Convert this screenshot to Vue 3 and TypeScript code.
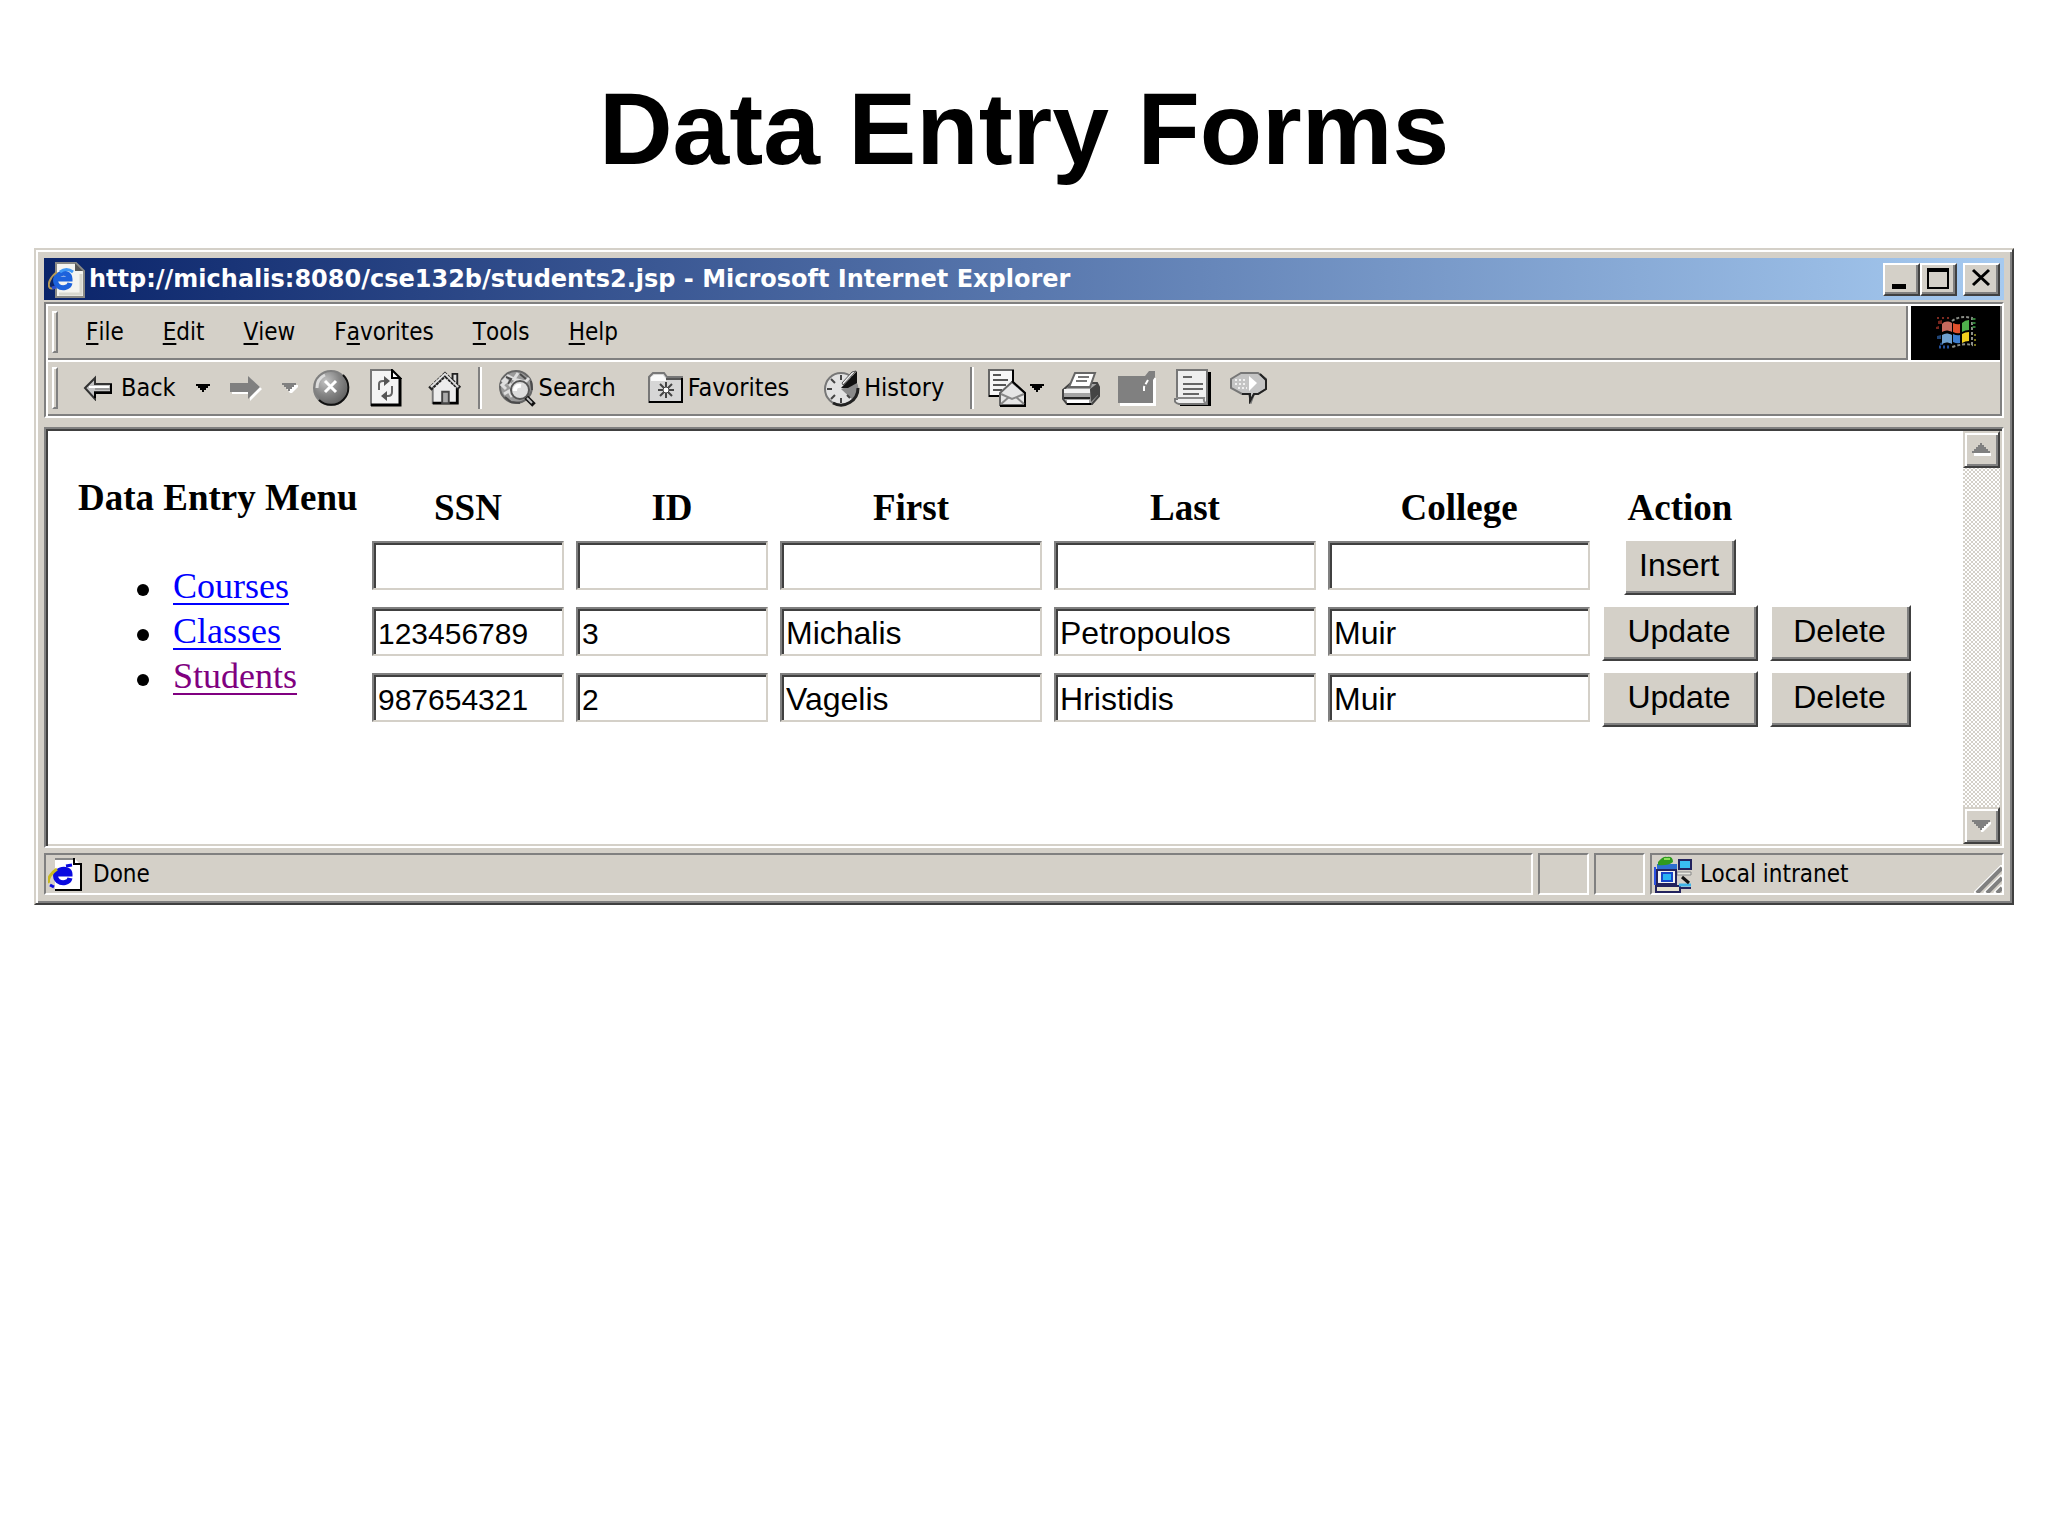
<script setup lang="ts">
import { ref } from 'vue'

interface Student {
  ssn: string
  id: string
  first: string
  last: string
  college: string
}
interface Column {
  key: keyof Student
  label: string
  size: 'narrow' | 'wide'
}

const menus: [string, string, string][] = [
  ['', 'F', 'ile'],
  ['', 'E', 'dit'],
  ['', 'V', 'iew'],
  ['F', 'a', 'vorites'],
  ['', 'T', 'ools'],
  ['', 'H', 'elp'],
]

const links = [
  { text: 'Courses', visited: false },
  { text: 'Classes', visited: false },
  { text: 'Students', visited: true },
]

const columns: Column[] = [
  { key: 'ssn', label: 'SSN', size: 'narrow' },
  { key: 'id', label: 'ID', size: 'narrow' },
  { key: 'first', label: 'First', size: 'wide' },
  { key: 'last', label: 'Last', size: 'wide' },
  { key: 'college', label: 'College', size: 'wide' },
]

const draft = ref<Student>({ ssn: '', id: '', first: '', last: '', college: '' })
const students = ref<Student[]>([
  { ssn: '123456789', id: '3', first: 'Michalis', last: 'Petropoulos', college: 'Muir' },
  { ssn: '987654321', id: '2', first: 'Vagelis', last: 'Hristidis', college: 'Muir' },
])
</script>

<template>
  <main class="slide">
    <h1 class="slide-title">Data Entry Forms</h1>

    <section class="window">
      <header class="titlebar">
        <svg class="app-icon" viewBox="0 0 37 37" aria-hidden="true">
          <path d="M8 2h20l8 8v26H8z" fill="#f4f4f0" stroke="#8a8a86" stroke-width="2" />
          <path d="M27 2v8h8z" fill="#555" />
          <path d="M33 13v20H11" fill="none" stroke="#d8d8d0" stroke-width="3" />
          <path d="M22 22c-1 5-8 6-12 3-4-4-3-10 2-12 5-2 10 0 10 5H10" fill="none" stroke="#1c62dc" stroke-width="5" />
          <path d="M12 11c4-3 9-3 13 0" fill="none" stroke="#3f97f5" stroke-width="3" />
          <path d="M9 11C2 16-1 24 2 27c1 1 4 0 6-1" fill="none" stroke="#b59a58" stroke-width="2" />
          <path d="M4 27l4-1" fill="none" stroke="#2a4fd0" stroke-width="3" />
        </svg>
        <span class="titlebar-text">http://michalis:8080/cse132b/students2.jsp - Microsoft Internet Explorer</span>
        <div class="window-buttons">
          <button class="bevel caption" type="button" aria-label="Minimize">
            <svg viewBox="0 0 24 24" aria-hidden="true"><path d="M3 18h14v5H3z" /></svg>
          </button>
          <button class="bevel caption" type="button" aria-label="Maximize">
            <svg viewBox="0 0 24 24" aria-hidden="true"><path d="M1 2h22v21H1zM3 6v15h18V6z" fill-rule="evenodd" /></svg>
          </button>
          <button class="bevel caption close" type="button" aria-label="Close">
            <svg viewBox="0 0 24 24" aria-hidden="true"><path d="M4 4l16 15M20 4L4 19" fill="none" stroke="#000" stroke-width="3" /></svg>
          </button>
        </div>
      </header>

      <div class="bars">
        <div class="menu-row">
          <nav class="bar menu" aria-label="Menu bar">
            <span class="grip"></span>
            <button v-for="m in menus" :key="m[2]" class="flat" type="button">{{ m[0] }}<u>{{ m[1] }}</u>{{ m[2] }}</button>
          </nav>
          <div class="brand">
            <svg viewBox="0 0 44 38" aria-hidden="true">
              <g opacity=".7">
                <path d="M4 7l4-1v4H4zM2 13l3-1v3H2z" fill="#a83428" />
                <path d="M3 22l4-1v4H3zM6 29l3-1v3H6z" fill="#2d62a8" />
              </g>
              <path d="M8 10c3-3 6-3 10-1v9c-4-2-7-2-10 0z" fill="#c96a5e" />
              <path d="M8 21c3-2 6-2 10 0v9c-4-2-7-2-10 0z" fill="#6fa0cf" />
              <path d="M19 9q4 2 7 1v9q-3 1-7-1z" fill="#e2512c" />
              <path d="M28 9q3-3 7-3v10q-4 0-7 2z" fill="#4fb04b" />
              <path d="M19 20q4 2 7 1v8q-3 1-7-1z" fill="#3d7ed0" />
              <path d="M28 20q3-2 7-2v9q-4 0-7 2z" fill="#f2cf1e" />
              <path d="M18 7q8-6 20-3v27q-8-2-20 2" fill="none" stroke="#8c8f88" stroke-width="2" stroke-dasharray="3 2" />
              <path d="M40 4v10" fill="none" stroke="#2f7d36" stroke-width="3" stroke-dasharray="2 2" />
              <path d="M41 20v14" fill="none" stroke="#7a741c" stroke-width="2" stroke-dasharray="2 3" />
              <path d="M5 33h12" fill="none" stroke="#23509c" stroke-width="3" stroke-dasharray="2 2" />
              <path d="M3 4h12" fill="none" stroke="#7d2a20" stroke-width="2" stroke-dasharray="2 3" />
            </svg>
          </div>
        </div>

        <div class="bar tools" role="toolbar" aria-label="Standard buttons">
          <span class="grip"></span>
          <button class="flat back" type="button">
            <svg width="30" height="26" viewBox="0 0 30 26" aria-hidden="true">
              <path d="M2 13L12 3v6h16v8H12v7z" fill="#c4c4c4" stroke="#333" stroke-width="2" />
              <path d="M6 12h20" stroke="#fff" stroke-width="2" />
              <path d="M12 14h15" stroke="#999" stroke-width="2" />
              <path d="M12 23v-5h16V9" fill="none" stroke="#000" stroke-width="2" />
            </svg>
            Back
          </button>
          <button class="flat caret-button" type="button" aria-label="Back history">
            <svg width="14" height="8" viewBox="0 0 14 8" aria-hidden="true"><path d="M0 0h14v2h-2v2h-2v2H8v2H6V6H4V4H2V2H0z" /></svg>
          </button>
          <button class="flat forward" type="button" aria-label="Forward">
            <svg width="32" height="28" viewBox="0 0 32 28" aria-hidden="true">
              <path d="M2 11h18V4l12 11-12 12v-7H2z" fill="#fff" />
              <path d="M0 9h18V2l12 11-12 12v-7H0z" fill="#808080" />
            </svg>
          </button>
          <button class="flat caret-button" type="button" aria-label="Forward history">
            <svg width="16" height="12" viewBox="0 0 16 12" aria-hidden="true">
              <path d="M2 3h14v2l-6 6H8z" fill="#fff" />
              <path d="M0 1h14v2h-2v2h-2v2H8v2H6V7H4V5H2V3H0z" fill="#808080" />
            </svg>
          </button>
          <button class="flat stop" type="button" aria-label="Stop">
            <svg width="38" height="38" viewBox="0 0 38 38" aria-hidden="true">
              <defs>
                <radialGradient id="ball" cx=".35" cy=".3" r=".8">
                  <stop offset="0" stop-color="#c4c4c4" />
                  <stop offset=".5" stop-color="#868686" />
                  <stop offset="1" stop-color="#5a5a5a" />
                </radialGradient>
              </defs>
              <circle cx="19" cy="19" r="17" fill="url(#ball)" stroke="#808080" stroke-width="2" />
              <path d="M31 6a17 17 0 0 1-24 25" fill="none" stroke="#111" stroke-width="2" />
              <path d="M5 19a14 14 0 0 1 8-13" fill="none" stroke="#ddd" stroke-width="3" />
              <path d="M13 12l11 11M24 12L13 23" stroke="#fff" stroke-width="3" />
            </svg>
          </button>
          <button class="flat" type="button" aria-label="Refresh">
            <svg width="32" height="38" viewBox="0 0 32 38" aria-hidden="true">
              <path d="M1 1h21l8 8v27H1z" fill="#f4f4f4" stroke="#777" stroke-width="2" />
              <path d="M30 9v27H1" fill="none" stroke="#000" stroke-width="3" />
              <path d="M22 1v8h8z" fill="#fff" stroke="#000" stroke-width="2" />
              <path d="M9 21v-6q0-3 4-3h2M22 17v6q0 4-4 4h-2" fill="none" stroke="#666" stroke-width="2" />
              <path d="M14 7l6 5-6 5zM17 22l-6 5 6 5z" fill="#555" />
            </svg>
          </button>
          <button class="flat home" type="button" aria-label="Home">
            <svg width="34" height="36" viewBox="0 0 36 36" aria-hidden="true">
              <path d="M26 3h5v14h-5z" fill="#ddd" stroke="#222" stroke-width="2" />
              <path d="M5 17L18 5l13 12v17H5z" fill="#ececec" stroke="#777" stroke-width="2" />
              <path d="M31 18v16H5" fill="none" stroke="#000" stroke-width="3" />
              <path d="M2 19L18 4l16 15" fill="none" stroke="#222" stroke-width="5" stroke-dasharray="3 1" />
              <path d="M3 17L18 3l14 14" fill="none" stroke="#e0e0e0" stroke-width="2" />
              <path d="M15 22h7v12h-7z" fill="#aaa" stroke="#444" stroke-width="2" />
            </svg>
          </button>
          <span class="divider"></span>
          <button class="flat search" type="button">
            <svg width="38" height="38" viewBox="0 0 38 38" aria-hidden="true">
              <circle cx="18" cy="18" r="16" fill="#9a9a9a" stroke="#666" stroke-width="2" />
              <path d="M4 13l6-6 6 3 4-6M8 20l-4-4 5-4 4 5 6-6 8 2 4-4M6 25l5-3 3 6" fill="none" stroke="#dedede" stroke-width="3" />
              <path d="M8 8l5 2-3 5M22 5l6 5M7 28l6 5 9 1M33 12l1 9" fill="none" stroke="#4a4a4a" stroke-width="2" />
              <path d="M28 28l8 8" stroke="#111" stroke-width="5" />
              <path d="M29 29l5 5" stroke="#bbb" stroke-width="2" />
              <circle cx="22" cy="21" r="9" fill="#dcdcdc" stroke="#555" stroke-width="2" />
              <path d="M17 22q0-6 6-5" fill="none" stroke="#fff" stroke-width="4" />
            </svg>
            Search
          </button>
          <button class="flat favorites" type="button">
            <svg width="36" height="32" viewBox="0 0 36 32" aria-hidden="true">
              <path d="M1 30V5l4-4h11l3 4h15v25z" fill="#d6d6d6" stroke="#777" stroke-width="2" />
              <path d="M3 8V5l3-2h9l3 4v2H3z" fill="#fafafa" />
              <path d="M18 7h16" stroke="#555" stroke-width="2" />
              <path d="M34 6v24H1" fill="none" stroke="#000" stroke-width="2" />
              <path d="M18 10v16M10 18h16M12 12l12 12M24 12L12 24" stroke="#444" stroke-width="2" />
              <circle cx="18" cy="18" r="3" fill="#fff" stroke="#444" />
            </svg>
            Favorites
          </button>
          <button class="flat history" type="button">
            <svg width="38" height="38" viewBox="0 0 38 38" aria-hidden="true">
              <circle cx="18" cy="20" r="16" fill="#e2e2e2" stroke="#777" stroke-width="2" />
              <path d="M18 20L34 14a17 17 0 0 1-3 18z" fill="#8a8a8a" />
              <path d="M10 34a17 17 0 0 0 25-15" fill="none" stroke="#222" stroke-width="3" />
              <path d="M18 6v5M18 29v5M4 20h5M8 10l4 4M8 30l4-4M27 29l-3-3" stroke="#444" stroke-width="2" />
              <path d="M18 19L34 2v12l-9 5z" fill="#111" />
              <path d="M20 16L33 2l-4 1-10 11z" fill="#eee" stroke="#555" />
            </svg>
            History
          </button>
          <span class="divider"></span>
          <div class="extras">
            <button class="flat mail" type="button" aria-label="Mail">
              <svg width="38" height="38" viewBox="0 0 38 38" aria-hidden="true">
                <path d="M1 1h24v26H1z" fill="#f6f6f6" stroke="#666" stroke-width="2" />
                <path d="M1 27h13M25 1v14" stroke="#000" stroke-width="2" />
                <path d="M5 6h8M5 11h15M5 16h13M5 21h9" stroke="#555" stroke-width="2" />
                <path d="M12 24l12-11 13 11v12H12z" fill="#e6e6e6" stroke="#666" stroke-width="2" />
                <path d="M24 12l13 12v13H12" fill="none" stroke="#000" stroke-width="2" />
                <path d="M13 25l11 5 12-5M13 35l8-7M36 35l-8-7" fill="none" stroke="#888" stroke-width="2" />
              </svg>
              <svg width="14" height="8" viewBox="0 0 14 8" aria-hidden="true"><path d="M0 0h14v2h-2v2h-2v2H8v2H6V6H4V4H2V2H0z" /></svg>
            </button>
            <button class="flat" type="button" aria-label="Print">
              <svg width="38" height="34" viewBox="0 0 38 34" aria-hidden="true">
                <path d="M1 19l8-7h26l2 4v9l-7 8H5l-4-5z" fill="#a4a4a4" stroke="#444" stroke-width="2" />
                <path d="M28 18l8-6v12l-7 7z" fill="#444" />
                <path d="M13 2h20l-5 14H7z" fill="#fff" stroke="#666" stroke-width="2" />
                <path d="M16 6h11M14 10h11" stroke="#777" stroke-width="2" />
                <path d="M2 18h26v4H2z" fill="#f2f2f2" />
                <path d="M2 26h26v2H2z" fill="#222" />
                <path d="M5 29h22v3H5z" fill="#fff" />
                <path d="M5 33h24" stroke="#000" stroke-width="2" />
              </svg>
            </button>
            <button class="flat" type="button" aria-label="Edit">
              <svg width="38" height="36" viewBox="0 0 38 36" aria-hidden="true">
                <path d="M2 8h28l3-5h5v33H2z" fill="#fff" />
                <path d="M36 3h2v5h-2z" fill="#d4d0c8" />
                <path d="M0 6h27l4-5h6v6l-2 3v23H0z" fill="#808080" />
                <path d="M30 10l-4 7v6" fill="none" stroke="#fff" stroke-width="2" stroke-dasharray="5 2" />
              </svg>
            </button>
            <button class="flat" type="button" aria-label="Discuss">
              <svg width="38" height="38" viewBox="0 0 38 38" aria-hidden="true">
                <path d="M6 3h31v34H6z" fill="#000" />
                <path d="M3 1h30v34H5q-5-1-4-5h2z" fill="#efefef" stroke="#777" stroke-width="2" />
                <path d="M2 29h28q-1 5 3 5" fill="none" stroke="#888" stroke-width="2" />
                <path d="M9 8h9M9 15h20M9 20h20M9 25h16" stroke="#666" stroke-width="2" />
              </svg>
            </button>
            <button class="flat" type="button" aria-label="Messenger">
              <svg width="38" height="32" viewBox="0 0 38 32" aria-hidden="true">
                <path d="M11 1h17l8 6v10l-8 5h-4l-3 8-2-8h-7L1 16V7z" fill="#c4c4c4" stroke="#777" stroke-width="2" />
                <path d="M30 2l6 6v9l-8 5h-4l-4 7v-7h-8" fill="none" stroke="#222" stroke-width="2" />
                <path d="M19 4l8 7-8 8z" fill="#fff" />
                <path d="M5 8h12M5 12h12M8 16h9" stroke="#f0f0f0" stroke-width="2" stroke-dasharray="2 2" />
              </svg>
            </button>
          </div>
        </div>
      </div>

      <div class="viewport">
        <div class="page">
          <nav class="entry-menu" aria-label="Data entry">
            <h2>Data Entry Menu</h2>
            <ul>
              <li v-for="l in links" :key="l.text">
                <a href="#" :class="{ visited: l.visited }">{{ l.text }}</a>
              </li>
            </ul>
          </nav>
          <table class="entry-table">
            <thead>
              <tr>
                <th v-for="c in columns" :key="c.key" scope="col">{{ c.label }}</th>
                <th scope="col">Action</th>
              </tr>
            </thead>
            <tbody>
              <tr>
                <td v-for="c in columns" :key="c.key" class="field">
                  <input v-model="draft[c.key]" type="text" :class="c.size" :aria-label="'New ' + c.label" />
                </td>
                <td><button class="bevel action insert" type="button">Insert</button></td>
              </tr>
              <tr v-for="s in students" :key="s.id">
                <td v-for="c in columns" :key="c.key" class="field">
                  <input v-model="s[c.key]" type="text" :class="c.size" :aria-label="c.label" />
                </td>
                <td><button class="bevel action update" type="button">Update</button></td>
                <td><button class="bevel action delete" type="button">Delete</button></td>
              </tr>
            </tbody>
          </table>
        </div>
        <div class="scrollbar">
          <button class="bevel scroll-button" type="button" aria-label="Scroll up">
            <svg width="20" height="14" viewBox="0 0 20 14" aria-hidden="true">
              <path d="M2 10h17v3H2z" fill="#fff" />
              <path d="M8 0h2v2h2v2h2v2h2v2h2v2H0V8h2V6h2V4h2V2h2z" fill="#808080" />
            </svg>
          </button>
          <button class="bevel scroll-button" type="button" aria-label="Scroll down">
            <svg width="20" height="14" viewBox="0 0 20 14" aria-hidden="true">
              <path d="M18 3h1v2l-8 8H9v-3z" fill="#fff" />
              <path d="M0 1h18v2h-2v2h-2v2h-2v2h-2v2H8V9H6V7H4V5H2V3H0z" fill="#808080" />
            </svg>
          </button>
        </div>
      </div>

      <footer class="status">
        <div class="cell message">
          <svg width="36" height="36" viewBox="0 0 36 36" aria-hidden="true">
            <path d="M7 2h19l8 8v24H7z" fill="#fff" />
            <path d="M7 3h19" stroke="#888" stroke-width="2" />
            <path d="M26 2v6h7v26H7" fill="none" stroke="#000" stroke-width="2" />
            <path d="M22 22c-1 5-8 6-12 3-4-4-3-9 2-11 5-2 10 0 10 4H10" fill="none" stroke="#0a0ae0" stroke-width="5" />
            <path d="M18 10l6-1" stroke="#0a0ae0" stroke-width="3" />
            <path d="M9 13C3 17-1 23 1 27" fill="none" stroke="#c8b820" stroke-width="3" />
            <path d="M2 29l4 2" stroke="#0a0ae0" stroke-width="3" />
          </svg>
          <span>Done</span>
        </div>
        <div class="cell small"></div>
        <div class="cell small"></div>
        <div class="cell zone">
          <svg width="38" height="38" viewBox="0 0 38 38" aria-hidden="true">
            <path d="M3 9h20v7H3z" fill="#2e6fd0" />
            <path d="M1 12v18" stroke="#2a50e0" stroke-width="2" />
            <path d="M4 7q5-6 9-5 6-1 6 5-5 4-15 3z" fill="#2f9a1f" />
            <path d="M10 4h6" stroke="#8be05a" stroke-width="2" />
            <path d="M25 5h12v9H25z" fill="#39bdf0" stroke="#23235e" stroke-width="2" />
            <path d="M23 17h14v3H23z" fill="#e8e8e0" stroke="#888" />
            <path d="M3 15h19v14H3z" fill="#f4f4f0" stroke="#23235e" stroke-width="2" />
            <path d="M8 18h10v8H8z" fill="#28b4f4" stroke="#1746c8" stroke-width="2" />
            <path d="M2 31h24v6H2z" fill="#e6e2cc" stroke="#23235e" stroke-width="2" />
            <path d="M25 30h12" stroke="#3fb4e8" stroke-width="3" />
            <path d="M26 33h11" stroke="#23235e" stroke-width="2" />
            <path d="M28 22l7 6" stroke="#111" stroke-width="3" />
          </svg>
          <span>Local intranet</span>
          <svg class="size-grip" width="28" height="28" viewBox="0 0 28 28" aria-hidden="true">
            <path d="M0 28L28 0v28z" fill="#d4d0c8" />
            <path d="M0 28L28 0M10 28L28 10M20 28l8-8" stroke="#fff" stroke-width="2" />
            <path d="M3 28L28 3M13 28L28 13M23 28l5-5" stroke="#808080" stroke-width="4" />
          </svg>
        </div>
      </footer>
    </section>
  </main>
</template>

<style>
body {
  background: #fff;
}
</style>

<style scoped>
.slide {
  --face: #d4d0c8;
  --shade: #808080;
  --dark: #404040;
  padding: 0 34px 60px;
  font-family: 'DejaVu Sans Condensed', 'Noto Sans', sans-serif;
  font-size: 24px;
  color: #000;
}
.slide-title {
  margin: 0;
  padding: 71px 0 61px;
  font: bold 102px/116px 'Liberation Sans', Arial, sans-serif;
  text-align: center;
}
button {
  box-sizing: border-box;
  margin: 0;
  font: inherit;
  color: inherit;
}
svg {
  display: block;
  flex: none;
}

/* Window frame */
.window {
  padding: 8px;
  background: var(--face);
  border: 2px solid;
  border-color: var(--face) var(--dark) var(--dark) var(--face);
  box-shadow: inset 2px 2px 0 #fff, inset -2px -2px 0 var(--shade);
}
.bevel {
  padding: 0;
  background: var(--face);
  border: 2px solid;
  border-color: #fff var(--dark) var(--dark) #fff;
  box-shadow: inset -2px -2px 0 var(--shade);
}
.titlebar {
  display: flex;
  align-items: center;
  height: 42px;
  padding: 0 4px;
  background: linear-gradient(to right, #0a246a, #a6caf0);
}
.app-icon {
  width: 37px;
  height: 37px;
}
.titlebar-text {
  flex: 1;
  margin-left: 4px;
  font-family: 'DejaVu Sans', 'Noto Sans', sans-serif;
  font-weight: bold;
  line-height: 32px;
  white-space: nowrap;
  color: #fff;
}
.window-buttons {
  display: flex;
}
.caption {
  display: grid;
  place-items: center;
  width: 37px;
  height: 33px;
  padding: 0 2px 2px 0;
}
.caption svg {
  width: 24px;
  height: 24px;
}
.close {
  margin-left: 6px;
}

/* Menu and tool bars */
.bars {
  margin-top: 2px;
  border: 2px solid;
  border-color: var(--shade) #fff #fff var(--shade);
  box-shadow: inset 2px 2px 0 #fff, inset -2px -2px 0 var(--shade);
  padding: 2px;
}
.menu-row {
  display: flex;
  border-bottom: 2px solid #fff;
}
.bar {
  display: flex;
  align-items: center;
  height: 52px;
  padding-left: 4px;
}
.menu {
  flex: 1;
  border-right: 2px solid var(--shade);
  border-bottom: 2px solid var(--shade);
  gap: 39px;
}
.grip {
  width: 6px;
  height: 42px;
  box-sizing: border-box;
  border: 2px solid;
  border-color: #fff var(--shade) var(--shade) #fff;
}
.menu .grip {
  margin-right: -11px;
}
.flat {
  display: flex;
  align-items: center;
  padding: 0;
  background: none;
  border: 0;
  line-height: 32px;
  white-space: nowrap;
}
.flat u {
  text-decoration-thickness: 2px;
  text-underline-offset: 3px;
}
.brand {
  display: grid;
  place-items: center;
  width: 89px;
  margin-left: 3px;
  background: #000;
  box-shadow: -3px 0 0 #fff;
}
.brand svg {
  width: 44px;
  height: 38px;
}
.tools {
  gap: 20px;
  font-size: 25px;
}
.back {
  gap: 8px;
  margin-left: 5px;
}
.stop {
  margin-left: -6px;
}
.home {
  margin-left: 6px;
}
.divider {
  width: 2px;
  height: 42px;
  margin: 0 -4px;
  background: var(--shade);
  border-right: 2px solid #fff;
}
.search,
.history {
  gap: 3px;
}
.favorites {
  gap: 4px;
  margin-left: 12px;
}
.history {
  margin-left: 14px;
  margin-right: 10px;
}
.extras {
  display: flex;
  align-items: center;
  gap: 18px;
  margin-left: -2px;
}
.mail {
  gap: 4px;
}

/* Browser viewport */
.viewport {
  display: flex;
  margin-top: 9px;
  background: #fff;
  border: 2px solid;
  border-color: var(--shade) #fff #fff var(--shade);
  box-shadow: inset 2px 2px 0 var(--dark), inset -2px -2px 0 var(--face);
  padding: 2px;
}
.page {
  display: flex;
  flex: 1;
  align-items: flex-start;
  padding: 46px 0 107px 30px;
  font-family: 'Liberation Serif', 'Times New Roman', serif;
}
.entry-menu {
  flex: none;
  width: 282px;
}
.entry-menu h2 {
  margin: 0 0 45px;
  font-size: 37px;
  line-height: 42px;
  white-space: nowrap;
}
.entry-menu ul {
  margin: 0;
  padding-left: 59px;
  font-size: 36px;
  line-height: 45px;
  list-style: none;
}
.entry-menu li {
  display: flex;
  align-items: center;
  gap: 24px;
}
.entry-menu li::before {
  content: '';
  width: 12px;
  height: 12px;
  margin-top: 6px;
  border-radius: 50%;
  background: #000;
}
.entry-menu a {
  color: #00f;
  text-decoration-thickness: 2px;
  text-underline-offset: 5px;
}
.entry-menu a.visited {
  color: #800080;
}
.entry-table {
  border-spacing: 12px 10px;
}
.entry-table th {
  padding: 0;
  font-size: 37px;
  line-height: 42px;
}
.entry-table td {
  padding: 0;
}
.entry-table .field {
  padding-bottom: 3px;
}
.entry-table input {
  display: block;
  box-sizing: border-box;
  height: 49px;
  margin: 0;
  padding: 4px 4px 0;
  background: #fff;
  border: 2px solid;
  border-color: var(--shade) var(--face) var(--face) var(--shade);
  border-radius: 0;
  box-shadow: inset 2px 2px 0 var(--dark);
  outline: 0;
  font-family: 'Liberation Sans', Arial, sans-serif;
  color: #000;
}
.entry-table .narrow {
  width: 192px;
  font-size: 30px;
}
.entry-table .wide {
  width: 262px;
  font-size: 32px;
}
.action {
  display: block;
  height: 56px;
  margin: 0 auto;
  padding: 0 2px 4px 0;
  font: 32px/40px 'Liberation Sans', Arial, sans-serif;
}
.insert {
  width: 112px;
}
.update {
  width: 156px;
}
.delete {
  width: 141px;
}
.scrollbar {
  display: flex;
  flex-direction: column;
  justify-content: space-between;
  width: 37px;
  background: repeating-conic-gradient(var(--face) 0 25%, #fff 0 50%) 0 0 / 4px 4px;
}
.scroll-button {
  display: grid;
  place-items: center;
  width: 37px;
  height: 37px;
  border-color: var(--face) var(--dark) var(--dark) var(--face);
  box-shadow: inset 2px 2px 0 #fff, inset -2px -2px 0 var(--shade);
}

/* Status bar */
.status {
  display: flex;
  gap: 5px;
  margin-top: 5px;
}
.cell {
  display: flex;
  align-items: center;
  box-sizing: border-box;
  height: 42px;
  border: 2px solid;
  border-color: var(--shade) #fff #fff var(--shade);
  line-height: 32px;
}
.message {
  flex: 1;
  gap: 9px;
  padding-left: 2px;
}
.small {
  width: 51px;
}
.zone {
  position: relative;
  gap: 8px;
  width: 354px;
  padding-left: 2px;
}
.size-grip {
  position: absolute;
  right: 0;
  bottom: 0;
}
</style>
